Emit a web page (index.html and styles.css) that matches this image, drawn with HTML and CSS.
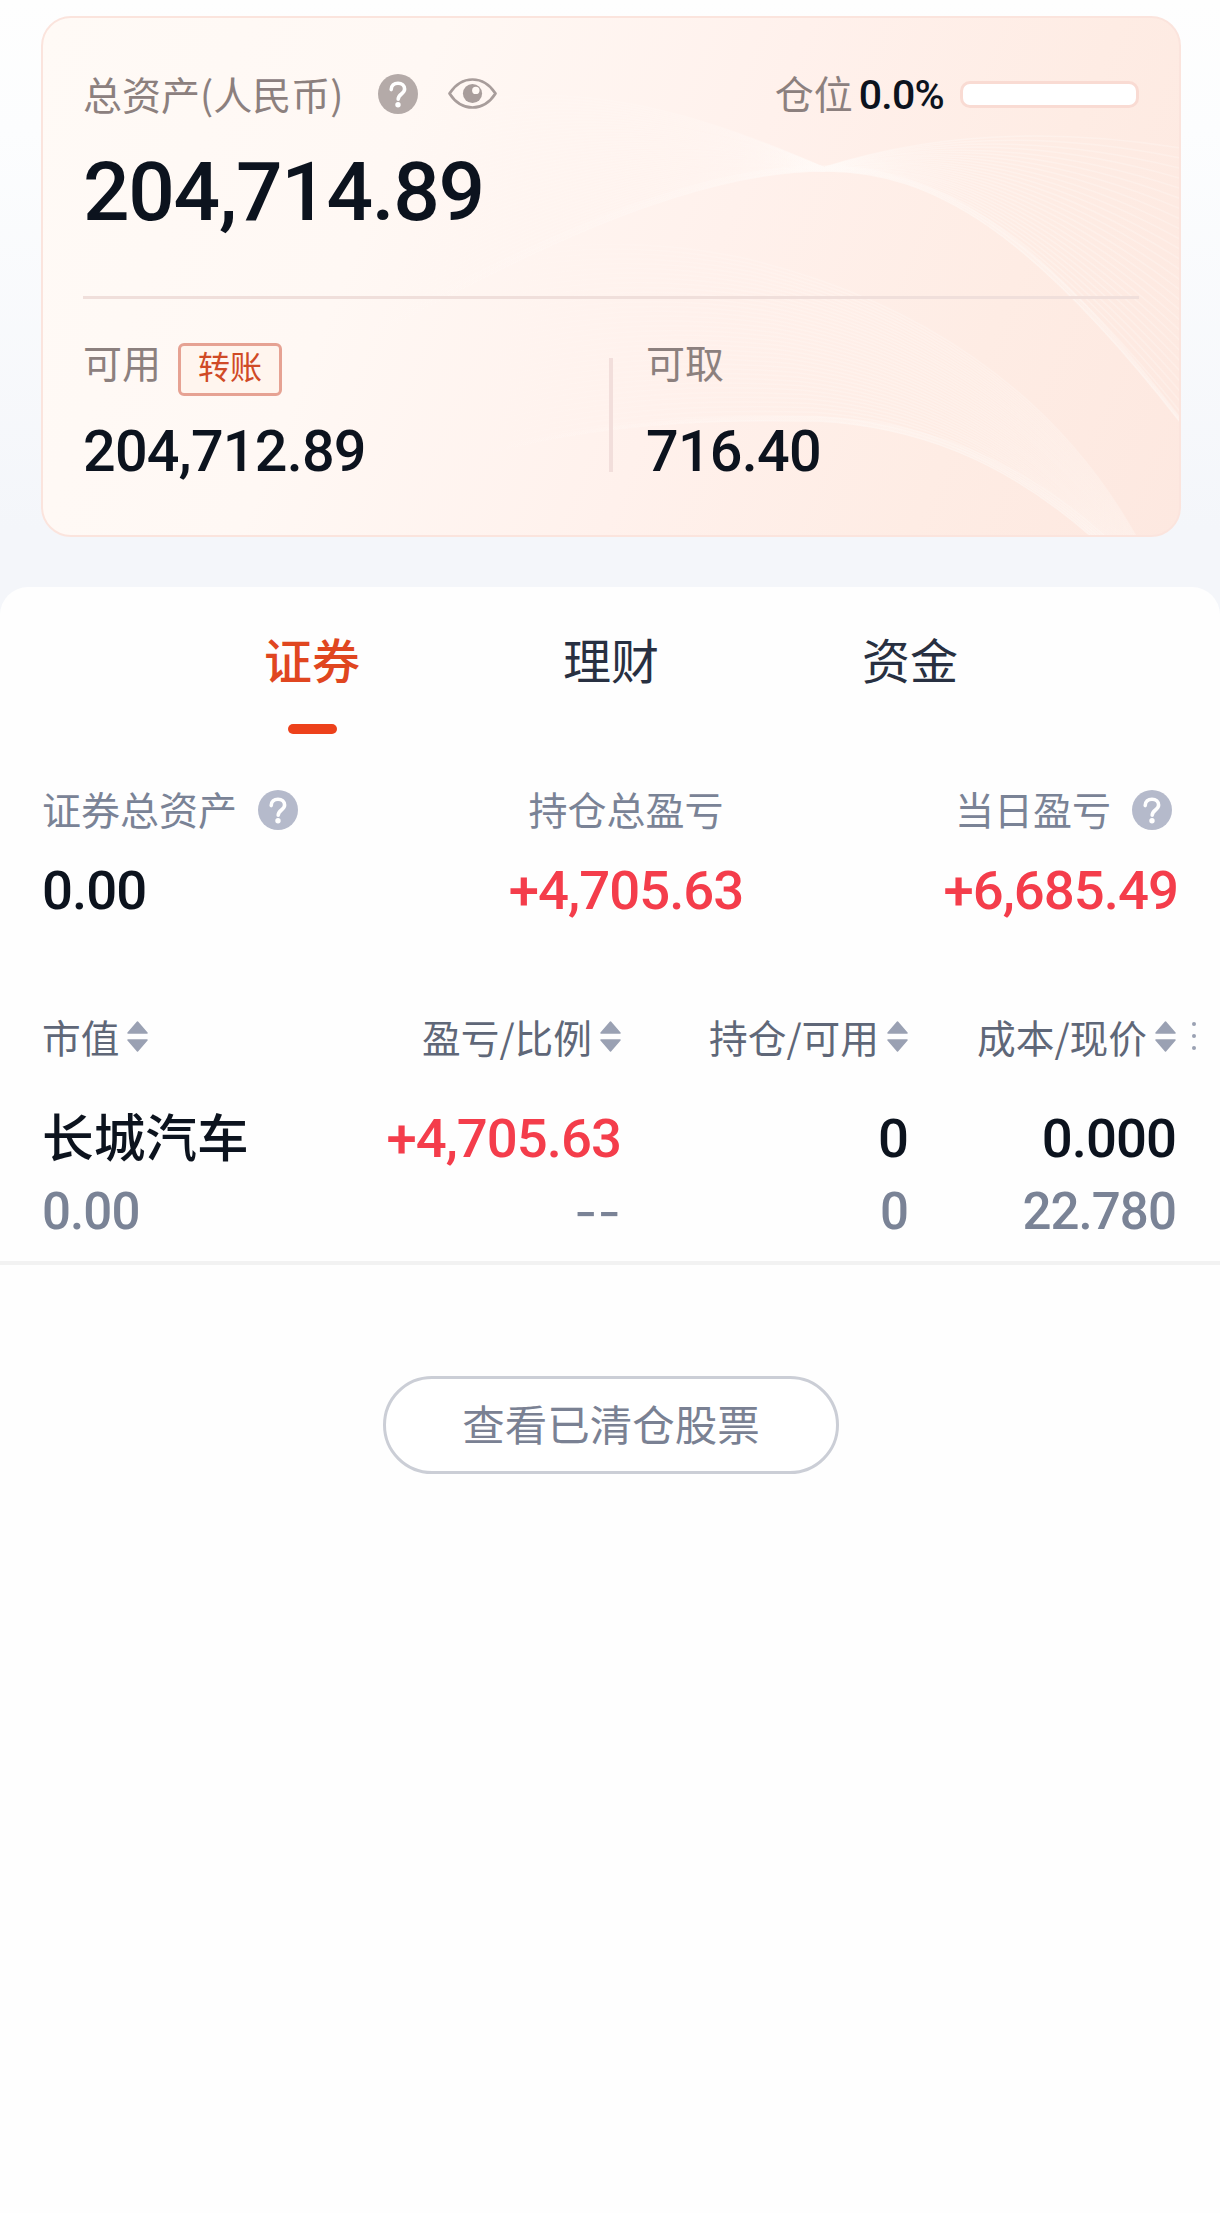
FILE: index.html
```html
<!DOCTYPE html>
<html lang="zh-CN">
<head>
    <meta charset="UTF-8">
    <meta name="viewport" content="width=device-width, initial-scale=1.0">
    <title>我的持仓</title>
    <link rel="stylesheet" href="styles.css">
</head>
<body>
    <svg class="defs" width="0" height="0">
        <symbol id="help" viewBox="0 0 40 40">
            <circle cx="20" cy="20" r="20" fill="currentColor"/>
            <path d="M13.200 15.600c0-4 2.900-6.400 6.800-6.400s6.600 2.300 6.600 5.800c0 5-6.400 5-6.400 10.200" fill="none" stroke="#fff" stroke-width="3.600" stroke-linecap="round"/>
            <circle cx="20" cy="30.800" r="2.700" fill="#fff"/>
        </symbol>
        <symbol id="sort" viewBox="0 0 21 31">
            <path d="M10.500 1L20 12H1Z M10.500 30L1 19H20Z" fill="currentColor" stroke="currentColor" stroke-width="1.500" stroke-linejoin="round"/>
        </symbol>
    </svg>

    <div class="card">
        <svg class="waves" id="waves" viewBox="0 0 1136 517" preserveAspectRatio="none">
            <defs>
                <linearGradient id="upper" gradientUnits="userSpaceOnUse" x1="250" x2="1136" y1="0" y2="0">
                    <stop offset="0" stop-color="#fffaf7" stop-opacity="0"/>
                    <stop offset="0.600" stop-color="#fffaf7" stop-opacity="1"/>
                    <stop offset="1" stop-color="#fffaf7" stop-opacity="0.700"/>
                </linearGradient>
                <linearGradient id="lower" gradientUnits="userSpaceOnUse" x1="400" x2="1136" y1="0" y2="0">
                    <stop offset="0" stop-color="#fffaf7" stop-opacity="0"/>
                    <stop offset="0.600" stop-color="#fffaf7" stop-opacity="0.800"/>
                    <stop offset="1" stop-color="#fffaf7" stop-opacity="0.700"/>
                </linearGradient>
            </defs>
        </svg>
        <div class="card-top">
            <span class="label">总资产(人民币)</span>
            <svg class="help"><use href="#help"/></svg>
            <svg class="eye" viewBox="0 0 49 31">
                <path d="M1.500 15.500C7 7 15 1.500 24.500 1.500S42 7 47.500 15.500C42 24 34 29.500 24.500 29.500S7 24 1.500 15.500Z" fill="none" stroke="currentColor" stroke-width="2.700" stroke-linejoin="round"/>
                <circle cx="24.500" cy="15.500" r="9.600" fill="currentColor"/>
                <circle cx="27.800" cy="12.400" r="3.700" fill="#fff9f5"/>
            </svg>
            <span class="label position">仓位</span>
            <span class="num percent">0.0%</span>
            <span class="bar"></span>
        </div>
        <div class="num total">204,714.89</div>
        <div class="card-bottom">
            <div class="cash">
                <div class="cash-label"><span class="label">可用</span><span class="transfer">转账</span></div>
                <div class="num">204,712.89</div>
            </div>
            <div class="cash">
                <div class="cash-label"><span class="label">可取</span></div>
                <div class="num">716.40</div>
            </div>
        </div>
    </div>

    <div class="panel">
        <div class="tabs">
            <div class="tab active">证券</div>
            <div class="tab">理财</div>
            <div class="tab">资金</div>
        </div>

        <div class="summary">
            <div class="item">
                <div class="item-label"><span>证券总资产</span><svg class="help"><use href="#help"/></svg></div>
                <div class="num">0.00</div>
            </div>
            <div class="item middle">
                <div class="item-label"><span>持仓总盈亏</span></div>
                <div class="num up">+4,705.63</div>
            </div>
            <div class="item last">
                <div class="item-label"><span>当日盈亏</span><svg class="help"><use href="#help"/></svg></div>
                <div class="num up">+6,685.49</div>
            </div>
        </div>

        <div class="row head">
            <div>市值<svg class="sort"><use href="#sort"/></svg></div>
            <div>盈亏/比例<svg class="sort"><use href="#sort"/></svg></div>
            <div>持仓/可用<svg class="sort"><use href="#sort"/></svg></div>
            <div>成本/现价<svg class="sort"><use href="#sort"/></svg></div>
            <div class="more"><i></i><i></i><i></i></div>
        </div>
        <div class="row stock">
            <div class="name">长城汽车</div>
            <div class="num up">+4,705.63</div>
            <div class="num">0</div>
            <div class="num">0.000</div>
        </div>
        <div class="row sub">
            <div class="num">0.00</div>
            <div class="num dash">--</div>
            <div class="num">0</div>
            <div class="num">22.780</div>
        </div>

        <button class="cleared">查看已清仓股票</button>
    </div>

    <script>
        const waves = document.getElementById('waves');

        // draws count curves blended between two cubic curves
        function fan(from, to, count, opacity, stroke) {
            for (let i = 0; i < count; i++) {
                const t = i / (count - 1);
                const p = from.map((v, k) => (v + (to[k] - v) * t).toFixed(1));
                const path = document.createElementNS('http://www.w3.org/2000/svg', 'path');
                path.setAttribute('d', `M${p[0]} ${p[1]}C${p.slice(2).join(' ')}`);
                path.setAttribute('fill', 'none');
                path.setAttribute('stroke', `url(#${stroke})`);
                path.setAttribute('stroke-width', 1.5);
                path.setAttribute('opacity', opacity);
                waves.appendChild(path);
            }
        }

        // upper wave: left side, right side, crest
        fan([200, 390, 400, 280, 610, 153, 782, 153],
            [200, 200, 400, 20, 600, 70, 782, 150], 44, 0.35, 'upper');
        fan([782, 153, 890, 153, 990, 215, 1138, 405],
            [782, 149, 880, 118, 1000, 108, 1138, 130], 28, 0.4, 'upper');
        fan([200, 390, 400, 280, 610, 153, 782, 153, 890, 153, 990, 215, 1138, 405],
            [200, 385, 400, 270, 610, 147, 782, 148, 890, 149, 990, 205, 1138, 401], 5, 0.35, 'upper');
        // lower wave
        fan([400, 450, 540, 400, 690, 402, 775, 403, 870, 408, 960, 440, 1050, 520],
            [300, 290, 440, 220, 580, 215, 700, 240, 870, 280, 1010, 370, 1094, 520], 38, 0.4, 'lower');
        fan([400, 450, 540, 400, 690, 402, 775, 403, 870, 408, 960, 440, 1050, 520],
            [400, 446, 540, 398, 690, 398, 775, 399, 870, 402, 970, 435, 1064, 520], 5, 0.4, 'lower');
    </script>
</body>
</html>
```
FILE: styles.css
```css
* {
    box-sizing: border-box;
}

body {
    margin: 0;
    padding: 16px 0 0;
    min-height: 2213px;
    font-family: 'Noto Sans CJK SC', sans-serif;
    font-size: 39px;
    color: #0c131e;
    background: #fefefe linear-gradient(#fefefe 0, #fcfdfe 130px, #f4f6fa 530px) no-repeat;
    background-size: 100% 640px;
}

.defs {
    position: absolute;
}

.num {
    font-family: Roboto, sans-serif;
    font-weight: 500;
    letter-spacing: -0.018em;
    white-space: nowrap;
}

.up {
    color: #f43d4b;
}

.help {
    width: 40px;
    height: 40px;
    flex: none;
}

/* assets card */
.card {
    position: relative;
    margin: 0 39px 0 41px;
    height: 521px;
    padding: 48px 40px 0;
    border: 2px solid #fbe4dd;
    border-radius: 30px;
    background: linear-gradient(112deg, #fffaf6 0%, #fff8f4 30%, #fff1ec 57%, #feece4 80%, #fde8e0 100%);
    overflow: hidden;
}

.waves {
    position: absolute;
    left: 0;
    top: 0;
    width: 100%;
    height: 100%;
}

.card > div {
    position: relative;
}

.card-top {
    display: flex;
    align-items: center;
    height: 56px;
}

.label {
    height: 58px;
    color: #8c807e;
    line-height: 56px;
}

.card-top .help {
    margin-left: 35px;
    color: #b4aaa8;
}

.eye {
    width: 49px;
    height: 31px;
    margin: -2px 0 0 30px;
    color: #a89d9b;
}

.card-top .position {
    height: 60px;
    margin-left: auto;
}

.percent {
    margin: 2px 0 0 6px;
    font-size: 41px;
}

.bar {
    width: 179px;
    height: 27px;
    margin-left: 16px;
    border: 3px solid #f9dbd3;
    border-radius: 10px;
    background: #fff;
}

.total {
    height: 174px;
    padding-top: 20px;
    font-size: 82px;
    line-height: 100px;
    letter-spacing: -0.016em;
}

.card-bottom {
    display: grid;
    grid-template-columns: 563px 1fr;
    height: 220px;
    padding-top: 34px;
    border-top: 3px solid #f0dfdb;
}

.card-bottom::before {
    content: "";
    position: absolute;
    left: 526px;
    top: 59px;
    width: 4px;
    height: 114px;
    background: #f2dedb;
}

.cash-label {
    display: flex;
    height: 62px;
}

.transfer {
    width: 104px;
    height: 53px;
    margin: 10px 0 0 17px;
    border: 3px solid #e6a293;
    border-radius: 6px;
    background: #fff5ee;
    color: #d04a26;
    font-size: 32px;
    line-height: 39px;
    text-align: center;
}

.cash .num {
    margin-top: 22px;
    font-size: 57.5px;
    line-height: 70px;
    letter-spacing: -0.013em;
}

/* holdings */
.panel {
    margin-top: 50px;
    min-height: 1626px;
    padding-top: 34px;
    border-radius: 28px 28px 0 0;
    background: #fefefe;
}

.tabs {
    display: flex;
    justify-content: center;
    height: 128px;
    padding-left: 2px;
}

.tab {
    width: 299px;
    color: #283041;
    font-size: 48px;
    line-height: 74px;
    text-align: center;
}

.active {
    color: #e04620;
    font-weight: 500;
}

.active::after {
    content: "";
    display: block;
    width: 49px;
    height: 10px;
    margin: 29px auto 0;
    border-radius: 5px;
    background: #ed411b;
}

.summary {
    display: grid;
    grid-template-columns: 400px 1fr 368px;
    height: 238px;
    padding: 33px 42px 0 42px;
}

.item-label {
    display: flex;
    align-items: center;
    height: 56px;
    color: #7a8396;
}

.item-label span {
    padding-bottom: 5px;
}

.item-label .help {
    margin-left: 21px;
    color: #b5bacb;
}

.middle .item-label {
    justify-content: center;
}

.middle {
    text-align: center;
}

.last .item-label {
    justify-content: flex-end;
    padding-right: 6px;
}

.last {
    text-align: right;
}

.item .num {
    margin-top: 17px;
    font-size: 54.5px;
    line-height: 70px;
}

.row {
    display: grid;
    grid-template-columns: 200px 379px 287px 268px 1fr;
    padding-left: 42px;
    text-align: right;
}

.row > :first-child {
    text-align: left;
    justify-content: flex-start;
}

.head {
    height: 104px;
    color: #5f6778;
    font-size: 38.7px;
    line-height: 98px;
}

.head div {
    display: flex;
    justify-content: flex-end;
}

.sort {
    width: 21px;
    height: 31px;
    margin: 34px 0 0 8px;
    color: #9aa1b3;
}

.head .more {
    flex-direction: column;
    align-items: flex-start;
    justify-content: center;
    gap: 8px;
    padding: 0 0 6px 16px;
}

.more i {
    width: 4px;
    height: 4px;
    border-radius: 2px;
    background: #9aa1b3;
}

.stock {
    height: 84px;
    font-size: 54.5px;
    line-height: 94px;
}

.name {
    font-size: 51.7px;
    font-weight: 500;
    line-height: 88px;
    white-space: nowrap;
}

.sub {
    height: 90px;
    color: #7a8396;
    font-size: 51px;
    line-height: 73px;
    border-bottom: 4px solid #f2f2f2;
}

.sub .dash {
    font-family: Inter, sans-serif;
    font-weight: 400;
    letter-spacing: 0;
}

.cleared {
    display: block;
    width: 456px;
    height: 98px;
    margin: 111px 0 0 383px;
    padding: 0 0 5px;
    border: 3px solid #cbced6;
    border-radius: 49px;
    background: #fff;
    color: #7a8193;
    font-family: inherit;
    font-size: 42.5px;
}
```
